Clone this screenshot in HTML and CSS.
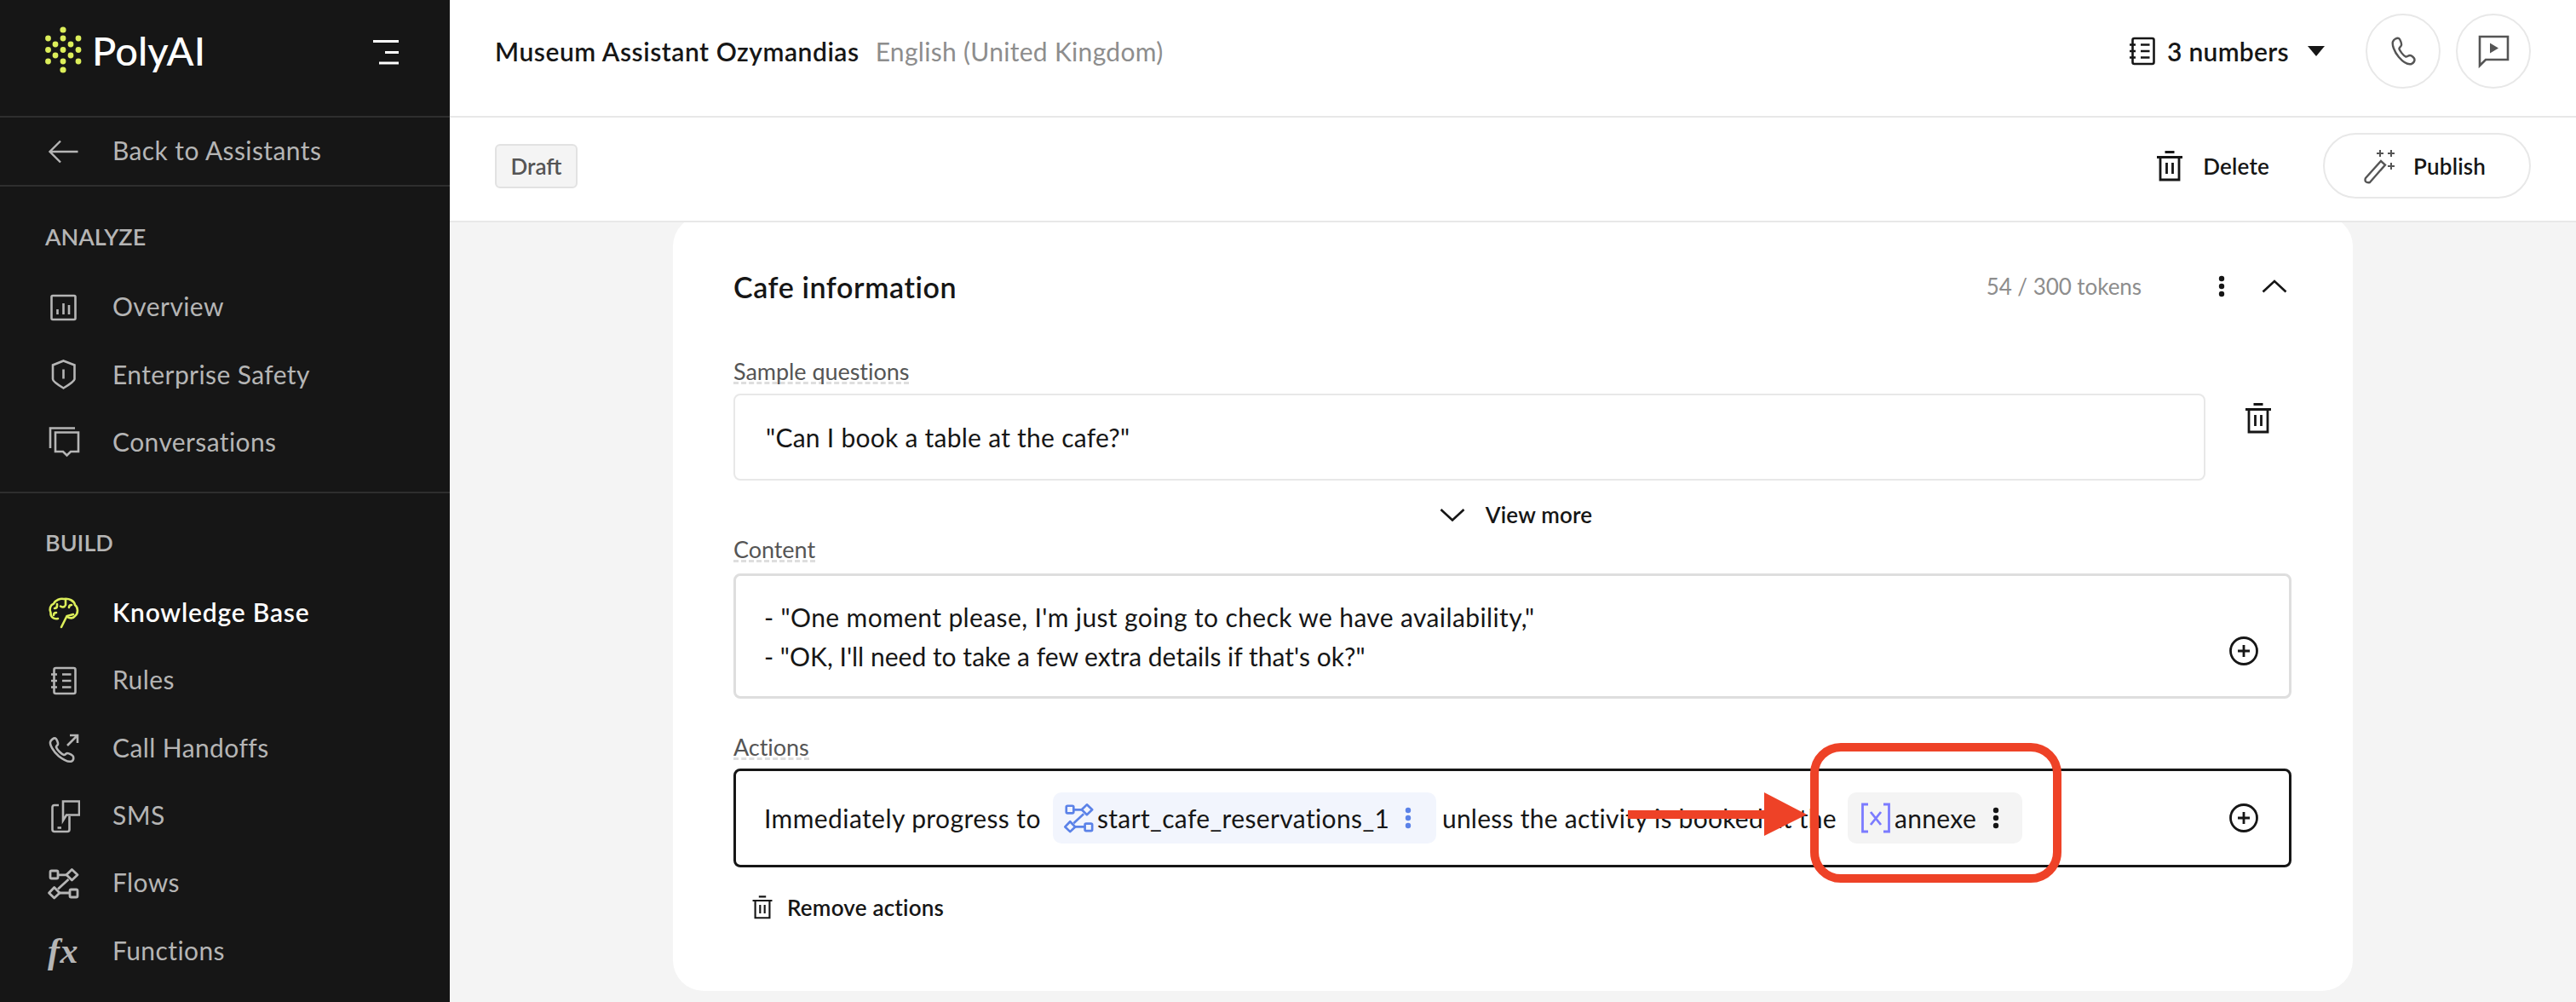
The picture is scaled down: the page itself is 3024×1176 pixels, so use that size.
FILE: index.html
```html
<!DOCTYPE html>
<html lang="en">
<head>
<meta charset="utf-8">
<title>PolyAI - Knowledge Base</title>
<link rel="stylesheet" href="styles.css">
</head>
<body>
<svg class="defs" width="0" height="0" aria-hidden="true">
  <symbol id="i-kebab" viewBox="0 0 12 32"><circle cx="6" cy="7" r="3.2"/><circle cx="6" cy="16" r="3.2"/><circle cx="6" cy="25" r="3.2"/></symbol>
  <symbol id="i-trash" viewBox="0 0 34 38"><path d="M2 8.500H32M11.500 2.500H22.500M6 8.500V35H28V8.500M13.500 15V28M20.500 15V28" fill="none" stroke="currentColor" stroke-width="2.800"/></symbol>
  <symbol id="i-plus" viewBox="0 0 36 36"><circle cx="18" cy="18" r="15.500" fill="none" stroke="currentColor" stroke-width="2.800"/><path d="M18 11V25M11 18H25" fill="none" stroke="currentColor" stroke-width="2.800"/></symbol>
  <symbol id="i-flow" viewBox="0 0 40 40"><g fill="none" stroke="currentColor" stroke-width="2.800" stroke-linejoin="round"><rect x="5" y="5" width="9" height="9" rx="1.500"/><path d="M30.400 3.500L37 9.800L30.400 16L24 9.800Z"/><path d="M9.700 24.500L16 31L9.700 37L3.500 31Z"/><rect x="28" y="27" width="9" height="9" rx="1.500"/><path d="M14 9.800H24M16 31H28M26.500 15L14 26.500"/></g></symbol>
  <symbol id="i-book" viewBox="0 0 40 40"><g fill="none" stroke="currentColor" stroke-width="2.600"><rect x="9.500" y="5" width="25" height="30" rx="2"/><path d="M6 12.500H13M6 20H13M6 27.500H13M19 12.500H29.500M19 20H29.500M19 27.500H29.500"/></g></symbol>
</svg>

<div class="app">
  <aside class="sidebar">
    <div class="brand">
      <div class="logo">
        <svg class="logo-mark" width="50" height="60" viewBox="0 0 50 60" fill="#dcee5a">
          <circle cx="25" cy="6" r="3.600"/><circle cx="7.500" cy="16" r="3.400"/><circle cx="25" cy="16" r="3.400"/><circle cx="43" cy="16" r="3.400"/><circle cx="16" cy="23" r="3.400"/><circle cx="34" cy="23" r="3.400"/><circle cx="7.500" cy="29.500" r="3.400"/><circle cx="25" cy="29.500" r="3.400"/><circle cx="43" cy="29.500" r="3.400"/><circle cx="16" cy="36" r="3.400"/><circle cx="34" cy="36" r="3.400"/><circle cx="7.500" cy="43" r="3.400"/><circle cx="25" cy="43" r="3.400"/><circle cx="43" cy="43" r="3.400"/><circle cx="25" cy="53" r="3.600"/>
        </svg>
        <span class="logo-text">PolyAI</span>
      </div>
      <svg class="burger" width="30" height="30" viewBox="0 0 30 30" stroke="#fff" stroke-width="3"><path d="M0 2.500H30M14 15.500H30M7 28H30"/></svg>
    </div>
    <a class="back-row">
      <span class="nav-icon"><svg width="40" height="40" viewBox="0 0 40 40" fill="none" stroke="currentColor" stroke-width="2.400"><path d="M4.500 20H37.500M17 7.500L4.500 20L17 32.500"/></svg></span>
      <span class="nav-label">Back to Assistants</span>
    </a>
    <section class="nav-section nav-analyze">
      <h2 class="nav-title">ANALYZE</h2>
      <a class="nav-row">
        <span class="nav-icon"><svg width="40" height="40" viewBox="0 0 40 40" fill="none" stroke="currentColor" stroke-width="2.600"><rect x="6.500" y="6" width="28" height="28" rx="1.500"/><path d="M13.500 22V28M20.500 15V28M27 17V28"/></svg></span>
        <span class="nav-label">Overview</span>
      </a>
      <a class="nav-row">
        <span class="nav-icon"><svg width="40" height="40" viewBox="0 0 40 40" fill="none" stroke="currentColor" stroke-width="2.600"><path d="M20.500 3.500L33.500 8.500V25Q33 28 20.500 35.500Q8 28 8 25V8.500Z"/><path d="M20.500 13.500V24.500"/></svg></span>
        <span class="nav-label">Enterprise Safety</span>
      </a>
      <a class="nav-row">
        <span class="nav-icon"><svg width="40" height="40" viewBox="0 0 40 40" fill="none" stroke="currentColor" stroke-width="2.600"><path d="M34 3.500H5V27"/><path d="M11 8.500H38V31H29L24.500 35.500L20 31H11Z"/></svg></span>
        <span class="nav-label">Conversations</span>
      </a>
    </section>
    <section class="nav-section nav-build">
      <h2 class="nav-title">BUILD</h2>
      <a class="nav-row nav-active">
        <span class="nav-icon nav-icon-lime"><svg width="40" height="40" viewBox="0 0 40 40" fill="none" stroke="currentColor" stroke-width="2.600" stroke-linecap="round"><path d="M14 27C9 28 5 25 5.500 20C3.500 16 5 11 9 9.500C11 5 17 3 21 4C27 3 33 6 34 11C38 14 38 21 34 24C32 27 28 27 25 25"/><path d="M18 37L24.500 24L32 22M13 10V12Q13 15 10 15M17 12.500Q20 14.500 22 12.500M23 5V11M30 11Q27 11 27 14M12 20Q9 20 9 23"/></svg></span>
        <span class="nav-label">Knowledge Base</span>
      </a>
      <a class="nav-row">
        <span class="nav-icon"><svg width="40" height="40"><use href="#i-book"/></svg></span>
        <span class="nav-label">Rules</span>
      </a>
      <a class="nav-row">
        <span class="nav-icon"><svg width="40" height="40" viewBox="0 0 40 40" fill="none" stroke="currentColor" stroke-width="2.600"><path d="M30 35.500C27 36.500 22 35 15 29.500C8 23.500 4.500 16 5 13C5.500 10.500 9 8 11 8.500C12.500 9 14.500 14 14 15.500C13.500 17 11.500 17.500 12 19C13 22 18 27 21 28C22.500 28.500 23.500 26 25 26C27 26 31.500 28.500 32 30C32.500 32 32 34.500 30 35.500Z"/><path d="M25 17L37 5M28 5H37V14"/></svg></span>
        <span class="nav-label">Call Handoffs</span>
      </a>
      <a class="nav-row">
        <span class="nav-icon"><svg width="40" height="40" viewBox="0 0 40 40" fill="none" stroke="currentColor" stroke-width="2.600"><path d="M20 2.500H39V18.500H24L20 25Z"/><path d="M15 7H10Q7.500 7 7.500 9.500V35.500Q7.500 38 10 38H25Q27.500 38 27.500 35.500V20M13.500 33.500H18"/></svg></span>
        <span class="nav-label">SMS</span>
      </a>
      <a class="nav-row">
        <span class="nav-icon"><svg width="40" height="40"><use href="#i-flow"/></svg></span>
        <span class="nav-label">Flows</span>
      </a>
      <a class="nav-row">
        <span class="nav-icon fx">fx</span>
        <span class="nav-label">Functions</span>
      </a>
    </section>
  </aside>

  <main class="main">
    <header class="topbar">
      <div class="assistant">
        <strong class="assistant-name">Museum Assistant Ozymandias</strong>
        <span class="assistant-lang">English (United Kingdom)</span>
      </div>
      <div class="top-actions">
        <div class="numbers">
          <svg class="numbers-icon" width="40" height="40"><use href="#i-book"/></svg>
          <span>3 numbers</span>
          <svg class="caret" width="20" height="12" viewBox="0 0 20 12" fill="#161616"><path d="M0 0H20L10 12Z"/></svg>
        </div>
        <button class="round-btn">
          <svg width="32" height="36" viewBox="0 0 32 36" fill="none" stroke="#555" stroke-width="2.400"><path d="M26 33C22 34 17 32 11 25C5 18 3 10 4 7C5 4 9 2 11 3C12.500 4 14.500 9 14 11C13.500 13 11 13.500 11.500 15.500C12.500 18 16 23 19 24.500C21 25 22 23 24 23C26 23 29.500 26 29.500 28C29.500 30 28 32 26 33Z"/></svg>
        </button>
        <button class="round-btn">
          <svg width="38" height="42" viewBox="0 0 38 42" fill="none" stroke="#555" stroke-width="2.600"><path d="M3 4H36V31H10L3 38Z"/><path d="M15 11.500L25 17.500L15 23.500Z" fill="#555" stroke="none"/></svg>
        </button>
      </div>
    </header>

    <div class="subbar">
      <span class="draft">Draft</span>
      <div class="sub-actions">
        <button class="delete-btn">
          <svg class="ink" width="34" height="38"><use href="#i-trash"/></svg>
          <span>Delete</span>
        </button>
        <button class="publish-btn">
          <svg width="40" height="44" viewBox="0 0 40 44" fill="none" stroke="#555" stroke-width="2.400"><path d="M3 36L21 16L26 20.500L8 41Q5 42 3 40Q2 38 3 36Z"/><path d="M16 7H24M20 3V11M29 7H37M33 3V11M29 22H37M33 18V26" stroke-width="2"/></svg>
          <span>Publish</span>
        </button>
      </div>
    </div>

    <div class="scroller">
      <article class="card">
        <div class="card-head">
          <h1 class="card-title">Cafe information</h1>
          <span class="tokens">54 / 300 tokens</span>
          <svg class="kebab head-kebab" width="12" height="32"><use href="#i-kebab"/></svg>
          <svg class="ink chevron-up" width="30" height="16" viewBox="0 0 30 16" fill="none" stroke="currentColor" stroke-width="2.600"><path d="M1.500 14.500L15 2L28.500 14.500"/></svg>
        </div>

        <label class="field-label label-sample">Sample questions</label>
        <div class="sample-row">
          <div class="box box-sample">"Can I book a table at the cafe?"</div>
          <svg class="ink sample-trash" width="34" height="38"><use href="#i-trash"/></svg>
        </div>
        <div class="view-more">
          <svg class="ink" width="30" height="16" viewBox="0 0 30 16" fill="none" stroke="currentColor" stroke-width="2.600"><path d="M1.500 2L15 14.500L28.500 2"/></svg>
          <span>View more</span>
        </div>

        <label class="field-label label-content">Content</label>
        <div class="box box-content">
          <div class="content-text">
            <p class="line-one">- "One moment please, I'm just going to check we have availability,"</p>
            <p class="line-two">- "OK, I'll need to take a few extra details if that's ok?"</p>
          </div>
          <svg class="ink plus" width="36" height="36"><use href="#i-plus"/></svg>
        </div>

        <label class="field-label label-actions">Actions</label>
        <div class="box box-actions">
          <span>Immediately progress to</span>
          <span class="chip chip-flow">
            <svg class="chip-icon" width="38" height="38"><use href="#i-flow"/></svg>
            <span>start_cafe_reservations_1</span>
            <svg class="chip-kebab" width="12" height="32"><use href="#i-kebab"/></svg>
          </span>
          <span class="unless">unless the activity is booked at the</span>
          <span class="chip chip-var">
            <svg class="chip-icon" width="36" height="38" viewBox="0 0 36 38" fill="none" stroke="#7b7bff" stroke-width="2.800"><path d="M9 3H2.500V35H9M27 3H33.500V35H27"/><path d="M12 12L24 27M24 12L12 27"/></svg>
            <span>annexe</span>
            <svg class="chip-kebab" width="12" height="32"><use href="#i-kebab"/></svg>
          </span>
          <svg class="ink plus plus-actions" width="36" height="36"><use href="#i-plus"/></svg>
        </div>

        <button class="remove-actions">
          <svg class="ink" width="26" height="30"><use href="#i-trash"/></svg>
          <span>Remove actions</span>
        </button>
      </article>
    </div>
  </main>

  <div class="callout-box"></div>
  <svg class="callout-arrow" width="212" height="52" viewBox="0 0 212 52" fill="#ee4227"><path d="M0 21H160V0L210 26L160 51V31H0Z"/></svg>
</div>
</body>
</html>
```
FILE: styles.css
```css
* { box-sizing: border-box; }
html, body { margin: 0; padding: 0; }
body {
  width: 3024px;
  height: 1176px;
  overflow: hidden;
  font-family: "Lato", "Liberation Sans", sans-serif;
  color: #161616;
  background: #f4f4f4;
}
.defs { position: absolute; }
p, h1, h2 { margin: 0; font-weight: inherit; font-size: inherit; }
button { font: inherit; letter-spacing: inherit; color: inherit; background: none; border: 0; padding: 0; }

.app {
  position: relative;
  display: grid;
  grid-template-columns: 528px 1fr;
  height: 1176px;
}

/* Sidebar */
.sidebar {
  background: #161616;
  color: #b5b5b5;
  font-size: 30px;
  display: flex;
  flex-direction: column;
}
.brand {
  height: 138px;
  border-bottom: 2px solid #2e2e2e;
  padding: 0 60px 0 49px;
  display: flex;
  align-items: center;
  justify-content: space-between;
}
.logo { display: flex; align-items: center; gap: 9px; margin-top: -18px; }
.logo-text { color: #fff; font-size: 47px; font-weight: 500; line-height: 60px; }
.burger { margin-top: -14px; }
.back-row {
  height: 81px;
  border-bottom: 2px solid #2e2e2e;
  display: flex;
  align-items: center;
  padding-left: 54px;
  gap: 38px;
  letter-spacing: 0.4px;
}
.nav-label { margin-top: -3px; }
.nav-icon { width: 40px; height: 40px; display: block; color: #b5b5b5; }
.nav-icon svg { display: block; }
.nav-icon-lime { color: #dcee5a; }
.nav-section { display: flex; flex-direction: column; }
.nav-analyze { padding: 39px 0 17.500px; border-bottom: 2px solid #2e2e2e; }
.nav-build { padding-top: 38px; }
.nav-title {
  height: 40px;
  line-height: 40px;
  margin: 0 0 23px 53px;
  font-size: 27px;
  font-weight: 600;
  color: #b5b5b5;
}
.nav-row {
  height: 79.400px;
  display: flex;
  align-items: center;
  padding-left: 54px;
  gap: 38px;
  letter-spacing: 0.4px;
}
.nav-active { color: #fff; font-weight: 600; letter-spacing: 0.8px; }
.fx {
  font-family: "Liberation Serif", serif;
  font-style: italic;
  font-weight: 700;
  font-size: 42px;
  line-height: 40px;
  text-align: center;
}

/* Main */
.main { display: flex; flex-direction: column; min-width: 0; }
.topbar {
  height: 138px;
  background: #fff;
  border-bottom: 2px solid #e8e8e8;
  padding: 0 53px;
  display: flex;
  align-items: center;
  justify-content: space-between;
  flex: none;
}
.assistant { display: flex; align-items: baseline; gap: 19px; font-size: 30px; margin-top: -16px; letter-spacing: 0.3px; }
.assistant-name { font-weight: 600; letter-spacing: 0.55px; }
.assistant-lang { color: #8d8d8d; }
.top-actions { display: flex; align-items: center; margin-top: -16px; }
.numbers { display: flex; align-items: center; font-size: 30px; font-weight: 600; margin-right: 48px; letter-spacing: 0.3px; }
.numbers-icon { margin-right: 10px; }
.caret { margin-left: 22px; }
.round-btn {
  width: 88px;
  height: 88px;
  border: 2px solid #e8e8e8;
  border-radius: 50%;
  display: flex;
  align-items: center;
  justify-content: center;
}
.round-btn + .round-btn { margin-left: 18px; }

.subbar {
  height: 123px;
  background: #fff;
  border-bottom: 2px solid #e8e8e8;
  padding: 0 53px 8px;
  display: flex;
  align-items: center;
  justify-content: space-between;
  flex: none;
}
.draft {
  width: 97px;
  height: 52px;
  background: #f4f4f4;
  border: 2px solid #e2e2e2;
  border-radius: 6px;
  color: #555;
  font-size: 26px;
  font-weight: 600;
  display: flex;
  align-items: center;
  justify-content: center;
}
.sub-actions { display: flex; align-items: center; letter-spacing: 0.2px; }
.delete-btn { display: flex; align-items: center; gap: 22px; font-size: 26px; font-weight: 600; margin-right: 63px; }
.publish-btn {
  width: 244px;
  height: 77px;
  border: 2px solid #e8e8e8;
  border-radius: 39px;
  display: flex;
  align-items: center;
  padding-left: 45px;
  gap: 19px;
  font-size: 26px;
  font-weight: 600;
}

/* Card */
.scroller { flex: 1; overflow: hidden; padding-left: 262px; min-height: 0; }
.card {
  width: 1972px;
  margin-top: -8px;
  padding: 53px 72px 78px 71px;
  background: #fff;
  border-radius: 36px;
  font-size: 30px;
  letter-spacing: 0.36px;
}
.ink { color: #161616; }
.kebab, .chip-kebab { fill: #161616; }
.card-head { height: 60px; display: flex; align-items: center; }
.card-title { font-size: 34px; font-weight: 600; flex: 1; letter-spacing: 0.6px; }
.tokens { color: #8d8d8d; font-size: 26px; letter-spacing: -0.05px; margin-right: 88px; }
.chevron-up { margin-left: 41px; margin-right: 5px; }

.field-label {
  display: block;
  width: max-content;
  height: 27px;
  line-height: 23px;
  border-bottom: 3px dashed #dedede;
  color: #555;
  font-size: 27px;
  letter-spacing: -0.05px;
}
.label-sample { margin: 58px 0 11px; }
.label-content { margin: 9px 0 13px; }
.label-actions { margin: 45px 0 10px; }

.box { border-radius: 8px; background: #fff; }
.sample-row { display: flex; align-items: flex-start; gap: 45px; }
.box-sample {
  width: 1728px;
  height: 102px;
  border: 2px solid #e8e8e8;
  padding-left: 36px;
  display: flex;
  align-items: center;
  letter-spacing: 0.26px;
}
.sample-trash { margin-top: 10px; }
.view-more {
  height: 40px;
  margin-top: 20px;
  padding-left: 8px;
  display: flex;
  align-items: center;
  justify-content: center;
  gap: 24px;
  font-size: 26px;
  font-weight: 600;
  letter-spacing: 0.2px;
}
.box-content {
  width: 1829px;
  height: 147px;
  border: 3px solid #dedede;
  padding: 0 35px 35px 33px;
  display: flex;
  align-items: flex-end;
  justify-content: space-between;
}
.content-text { align-self: center; padding-top: 35px; line-height: 46px; }
.line-one { letter-spacing: 0.38px; }
.line-two { letter-spacing: 0.02px; }
.box-actions {
  width: 1829px;
  height: 116px;
  border: 3px solid #161616;
  padding: 0 35px 0 33px;
  display: flex;
  align-items: center;
  white-space: nowrap;
}
.box-actions > span:first-child { letter-spacing: 0.42px; }
.unless { letter-spacing: 0.25px; }
.chip {
  height: 60px;
  border-radius: 10px;
  display: flex;
  align-items: center;
}
.chip-flow {
  width: 450px;
  margin: 0 7px 0 14px;
  padding-left: 11px;
  background: #f2f5fd;
}
.chip-flow .chip-icon { color: #5b82e8; margin-right: 3px; }
.chip-flow .chip-kebab { fill: #5b82e8; margin-left: 16px; }
.chip-var {
  width: 205px;
  margin-left: 13px;
  padding-left: 15px;
  background: #f4f4f4;
}
.chip-var .chip-icon { margin-right: 4px; }
.chip-var .chip-kebab { margin-left: 17px; }
.plus-actions { margin-left: auto; }
.remove-actions {
  height: 40px;
  margin-top: 27px;
  margin-left: 21px;
  display: flex;
  align-items: center;
  gap: 16px;
  font-size: 26px;
  font-weight: 600;
  letter-spacing: 0.2px;
}

/* Annotation overlay */
.callout-box {
  position: absolute;
  left: 2125px;
  top: 872px;
  width: 295px;
  height: 164px;
  border: 10px solid #ee4227;
  border-radius: 36px;
}
.callout-arrow { position: absolute; left: 1911px; top: 930px; }
```
